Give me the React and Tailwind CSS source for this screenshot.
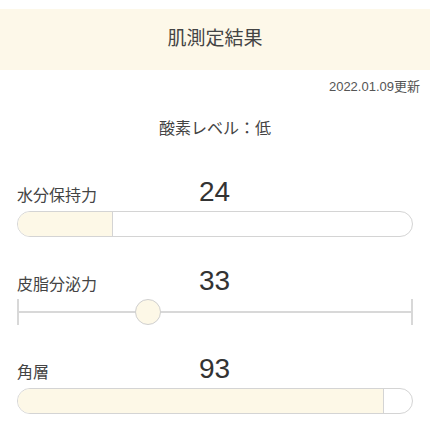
const font = { fontFamily: '"Liberation Sans", "Noto Sans CJK JP", sans-serif' };

function Bar({ label, value }) {
  return (
    <div className="px-[17px]">
      <div className="flex items-end h-[36px]">
        <span className="w-[182px] text-[16px] leading-none text-[#444] pb-[2px]">{label}</span>
        <span className="text-[28px] leading-none text-[#333] font-light">{value}</span>
      </div>
      <div className="mt-[5px] h-[26px] rounded-full border border-[#d4d4d4] bg-white overflow-hidden flex">
        <div className="h-full bg-[#fdf8e7] border-r border-[#d4d4d4]" style={{ width: `${value}%` }} />
      </div>
    </div>
  );
}

function Slider({ label, value }) {
  return (
    <div className="px-[17px]">
      <div className="flex items-end h-[36px]">
        <span className="w-[182px] text-[16px] leading-none text-[#444] pb-[2px]">{label}</span>
        <span className="text-[28px] leading-none text-[#333] font-light">{value}</span>
      </div>
      <div className="relative mt-[4px] h-[26px] flex items-center border-x-2 border-[#d8d8d8]">
        <div className="w-full h-[2px] bg-[#d8d8d8]" />
        <div
          className="absolute top-0 w-[26px] h-[26px] rounded-full bg-[#fdf8e7] border border-[#cfcfcf] -translate-x-1/2"
          style={{ left: `${value}%` }}
        />
      </div>
    </div>
  );
}

export default function App() {
  return (
    <div className="w-[430px] h-[430px] bg-white overflow-hidden" style={font}>
      <div className="mt-[9px] h-[61px] bg-[#fdf8e9] flex items-center justify-center">
        <span className="text-[19px] text-[#444]">肌測定結果</span>
      </div>
      <div className="flex justify-end pr-[10px] mt-[7px]">
        <span className="text-[13px] text-[#555]">2022.01.09更新</span>
      </div>
      <div className="flex justify-center mt-[20px]">
        <span className="text-[16px] text-[#444]">酸素レベル：低</span>
      </div>
      <div className="mt-[29px] flex flex-col gap-[22px]">
        <Bar label="水分保持力" value={24} />
        <Slider label="皮脂分泌力" value={33} />
        <Bar label="角層" value={93} />
      </div>
    </div>
  );
}
